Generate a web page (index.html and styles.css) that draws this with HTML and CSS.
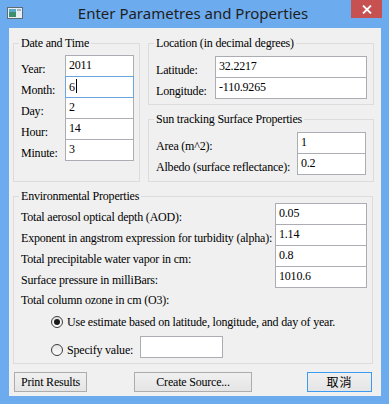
FILE: index.html
```html
<!DOCTYPE html>
<html>
<head>
<meta charset="utf-8">
<link rel="stylesheet" href="styles.css">
</head>
<body>
<div class="window">
  <div class="titlebar">
    <svg class="appicon" width="16" height="12" viewBox="0 0 16 12">
      <rect x="0.5" y="0.5" width="15" height="11" fill="#e8eef2" stroke="#5d6b75"/>
      <rect x="2" y="2" width="7" height="8" fill="#3f8f6e"/>
      <rect x="2" y="2" width="7" height="3" fill="#5aa7c8"/>
      <rect x="10" y="2" width="4" height="2" fill="#9fb6c6"/>
    </svg>
    <div class="title">Enter Parametres and Properties</div>
    <div class="close">
      <svg width="10" height="9" viewBox="0 0 10 9"><path d="M1 0.5 L9 8.5 M9 0.5 L1 8.5" stroke="#fff" stroke-width="1.8"/></svg>
    </div>
  </div>
  <div class="client">
    <div class="toprow">
      <section class="group date">
        <div class="legend">Date and Time</div>
        <div class="box">
          <div class="form date-form">
            <div class="lbl">Year:</div><div class="field">2011</div>
            <div class="lbl">Month:</div><div class="field focus">6<span class="caret"></span></div>
            <div class="lbl">Day:</div><div class="field">2</div>
            <div class="lbl">Hour:</div><div class="field">14</div>
            <div class="lbl">Minute:</div><div class="field">3</div>
          </div>
        </div>
      </section>
      <div class="rightcol">
        <section class="group loc">
          <div class="legend">Location (in decimal degrees)</div>
          <div class="box">
            <div class="form loc-form">
              <div class="lbl">Latitude:</div><div class="field">32.2217</div>
              <div class="lbl">Longitude:</div><div class="field">-110.9265</div>
            </div>
          </div>
        </section>
        <section class="group sun">
          <div class="legend">Sun tracking Surface Properties</div>
          <div class="box">
            <div class="form sun-form">
              <div class="lbl">Area (m^2):</div><div class="field">1</div>
              <div class="lbl">Albedo (surface reflectance):</div><div class="field">0.2</div>
            </div>
          </div>
        </section>
      </div>
    </div>
    <section class="group env">
      <div class="legend">Environmental Properties</div>
      <div class="box">
        <div class="form env-form">
          <div class="lbl">Total aerosol optical depth (AOD):</div><div class="field">0.05</div>
          <div class="lbl">Exponent in angstrom expression for turbidity (alpha):</div><div class="field">1.14</div>
          <div class="lbl">Total precipitable water vapor in cm:</div><div class="field">0.8</div>
          <div class="lbl">Surface pressure in milliBars:</div><div class="field">1010.6</div>
        </div>
        <div class="ozone">Total column ozone in cm (O3):</div>
        <div class="radiorow first">
          <span class="radio checked"></span><span class="rtext">Use estimate based on latitude, longitude, and day of year.</span>
        </div>
        <div class="radiorow second">
          <span class="radio"></span><span class="rtext">Specify value:</span><div class="field specify"></div>
        </div>
      </div>
    </section>
    <div class="buttons">
      <div class="btn print">Print Results</div>
      <div class="btn create">Create Source...</div>
      <div class="btn cancel">取消</div>
    </div>
  </div>
</div>
</body>
</html>
```
FILE: styles.css
```css
body {
  margin: 0;
  font-family: "Liberation Serif", "Times New Roman", serif;
  font-size: 12px;
  letter-spacing: -0.2px;
  color: #000;
}
.window {
  width: 389px;
  height: 404px;
  background: #6cabee;
  display: flex;
  flex-direction: column;
}
.titlebar {
  height: 28px;
  display: flex;
  align-items: flex-start;
}
.appicon {
  margin: 7px 0 0 7px;
  flex: none;
}
.title {
  flex: 1;
  text-align: center;
  padding-left: 12px;
  font-family: "Noto Sans", "Open Sans", sans-serif;
  font-size: 15px;
  letter-spacing: 0;
  line-height: 26px;
  color: #1e1e1e;
}
.close {
  width: 31px;
  height: 18px;
  margin: 0 7px 0 0;
  background: #c75050;
  display: flex;
  align-items: center;
  justify-content: center;
  flex: none;
}
.client {
  flex: 1;
  margin: 0 8px 8px 9px;
  background: #f0f0f0;
  padding: 8px 0 0 4px;
  display: flex;
  flex-direction: column;
}
.toprow {
  display: flex;
  gap: 8px;
  align-items: stretch;
}
.group {
  display: flex;
  flex-direction: column;
}
.legend {
  position: relative;
  z-index: 1;
  align-self: flex-start;
  margin: 0 0 -7px 6px;
  padding: 0 2px;
  line-height: 14px;
  background: #f0f0f0;
  white-space: nowrap;
}
.box {
  flex: 1;
  border: 1px solid #dcdcdc;
  box-sizing: border-box;
}
.date {
  width: 127px;
}
.date .box {
  padding: 11px 5px 21px 7px;
}
.rightcol {
  width: 226px;
  display: flex;
  flex-direction: column;
}
.loc .box {
  padding: 12px 6px 6px 7px;
}
.sun {
  margin-top: 7px;
  flex: 1;
}
.sun .box {
  padding: 12px 7px 7px 7px;
}
.form {
  display: grid;
  grid-auto-rows: 21px;
}
.date-form { grid-template-columns: 44px 69px; }
.loc-form { grid-template-columns: 59px 152px; }
.sun-form { grid-template-columns: 141px 69px; }
.env-form { grid-template-columns: 254px 92px; }
.lbl {
  padding-top: 6px;
  line-height: 16px;
  white-space: nowrap;
}
.field {
  height: 22px;
  box-sizing: border-box;
  border: 1px solid #abadb3;
  background: #fff;
  padding: 2px 0 0 3px;
  line-height: 15px;
  position: relative;
}
.field.focus {
  border-color: #6aa5e0;
  z-index: 1;
}
.caret {
  display: inline-block;
  width: 1px;
  height: 14px;
  background: #000;
  vertical-align: -2px;
  margin-left: 1px;
}
.env {
  width: 360px;
  margin-top: 7px;
}
.env .box {
  padding: 6px 5px 5px 7px;
}
.ozone {
  margin-top: 5px;
  line-height: 16px;
}
.radiorow {
  display: flex;
  align-items: flex-start;
  padding-left: 30px;
}
.radiorow.first {
  margin-top: 6px;
  height: 16px;
}
.radiorow.first .radio { margin-top: 2px; }
.radiorow.second {
  margin-top: 6px;
  height: 22px;
}
.radiorow.second .radio { margin-top: 8px; }
.radiorow.second .rtext { margin-top: 6px; }
.radio {
  width: 12px;
  height: 12px;
  box-sizing: border-box;
  border: 1px solid #3c3c3c;
  border-radius: 50%;
  background: linear-gradient(#e6e6e6, #fcfcfc);
  display: flex;
  align-items: center;
  justify-content: center;
  flex: none;
}
.radio.checked::after {
  content: "";
  width: 6px;
  height: 6px;
  border-radius: 50%;
  background: #1a1a1a;
}
.rtext {
  margin-left: 4px;
  line-height: 16px;
  white-space: nowrap;
}
.field.specify {
  width: 83px;
  margin-left: 7px;
}
.buttons {
  display: flex;
  margin-top: 8px;
}
.btn {
  height: 20px;
  box-sizing: border-box;
  border: 1px solid #acacac;
  background: linear-gradient(#f0f0f0, #e5e5e5);
  text-align: center;
  line-height: 18px;
}
.print {
  width: 73px;
  margin-left: 1px;
}
.create {
  width: 118px;
  margin-left: 47px;
}
.cancel {
  width: 65px;
  margin-left: 55px;
  border-color: #3c9bf0;
  font-family: "Noto Sans CJK TC", sans-serif;
  font-size: 12px;
  letter-spacing: 1px;
}
```
